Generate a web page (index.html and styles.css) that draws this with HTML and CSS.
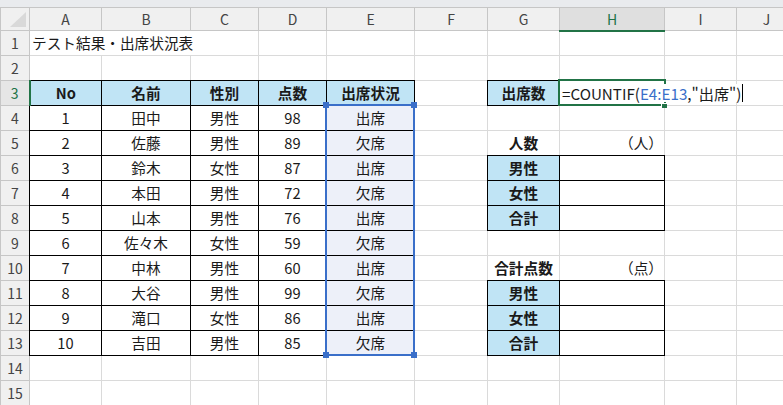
FILE: index.html
```html
<!DOCTYPE html>
<html lang="ja">
<head>
    <meta charset="UTF-8">
    <meta name="viewport" content="width=device-width, initial-scale=1.0">
    <title>テスト結果・出席状況表</title>
    <link rel="stylesheet" href="styles.css">
</head>
<body>

    <div class="toolbar-edge"></div>

    <table class="sheet">
        <colgroup>
            <col class="col-rowhead">
            <col class="col-a">
            <col class="col-b">
            <col class="col-c">
            <col class="col-d">
            <col class="col-e">
            <col class="col-f">
            <col class="col-g">
            <col class="col-h">
            <col class="col-i">
            <col class="col-j">
        </colgroup>
        <thead>
            <tr class="col-heads">
                <th class="corner"></th>
                <th>A</th><th>B</th><th>C</th><th>D</th><th>E</th><th>F</th><th>G</th>
                <th class="current">H</th><th>I</th><th>J</th>
            </tr>
        </thead>
        <tbody>
            <tr>
                <th>1</th>
                <td class="spill">テスト結果・出席状況表</td><td class="spill"></td>
                <td></td><td></td><td></td><td></td><td></td><td></td><td></td><td></td>
            </tr>
            <tr>
                <th>2</th>
                <td></td><td></td><td></td><td></td><td></td><td></td><td></td><td></td><td></td><td></td>
            </tr>
            <tr>
                <th class="current">3</th>
                <td class="head">No</td><td class="head">名前</td><td class="head">性別</td><td class="head">点数</td><td class="head">出席状況</td>
                <td></td>
                <td class="head">出席数</td>
                <td class="active"><span class="formula">=COUNTIF(<span class="ref">E4:E13</span>,"出席")</span></td>
                <td></td><td></td>
            </tr>
            <tr>
                <th>4</th>
                <td class="box">1</td><td class="box">田中</td><td class="box">男性</td><td class="box">98</td>
                <td class="box picked range-top">
                    <div class="range"><i class="knob tl"></i><i class="knob tr"></i><i class="knob bl"></i><i class="knob br"></i></div>出席
                </td>
                <td></td><td></td><td></td><td></td><td></td>
            </tr>
            <tr>
                <th>5</th>
                <td class="box">2</td><td class="box">佐藤</td><td class="box">男性</td><td class="box">89</td><td class="box picked">欠席</td>
                <td></td>
                <td class="label">人数</td><td class="unit">（人）</td>
                <td></td><td></td>
            </tr>
            <tr>
                <th>6</th>
                <td class="box">3</td><td class="box">鈴木</td><td class="box">女性</td><td class="box">87</td><td class="box picked">出席</td>
                <td></td>
                <td class="head">男性</td><td class="box"></td>
                <td></td><td></td>
            </tr>
            <tr>
                <th>7</th>
                <td class="box">4</td><td class="box">本田</td><td class="box">男性</td><td class="box">72</td><td class="box picked">欠席</td>
                <td></td>
                <td class="head">女性</td><td class="box"></td>
                <td></td><td></td>
            </tr>
            <tr>
                <th>8</th>
                <td class="box">5</td><td class="box">山本</td><td class="box">男性</td><td class="box">76</td><td class="box picked">出席</td>
                <td></td>
                <td class="head">合計</td><td class="box"></td>
                <td></td><td></td>
            </tr>
            <tr>
                <th>9</th>
                <td class="box">6</td><td class="box">佐々木</td><td class="box">女性</td><td class="box">59</td><td class="box picked">欠席</td>
                <td></td><td></td><td></td><td></td><td></td>
            </tr>
            <tr>
                <th>10</th>
                <td class="box">7</td><td class="box">中林</td><td class="box">男性</td><td class="box">60</td><td class="box picked">出席</td>
                <td></td>
                <td class="label">合計点数</td><td class="unit">（点）</td>
                <td></td><td></td>
            </tr>
            <tr>
                <th>11</th>
                <td class="box">8</td><td class="box">大谷</td><td class="box">男性</td><td class="box">99</td><td class="box picked">欠席</td>
                <td></td>
                <td class="head">男性</td><td class="box"></td>
                <td></td><td></td>
            </tr>
            <tr>
                <th>12</th>
                <td class="box">9</td><td class="box">滝口</td><td class="box">女性</td><td class="box">86</td><td class="box picked">出席</td>
                <td></td>
                <td class="head">女性</td><td class="box"></td>
                <td></td><td></td>
            </tr>
            <tr>
                <th>13</th>
                <td class="box">10</td><td class="box">吉田</td><td class="box">男性</td><td class="box">85</td><td class="box picked">欠席</td>
                <td></td>
                <td class="head">合計</td><td class="box"></td>
                <td></td><td></td>
            </tr>
            <tr>
                <th>14</th>
                <td></td><td></td><td></td><td></td><td></td><td></td><td></td><td></td><td></td><td></td>
            </tr>
            <tr>
                <th>15</th>
                <td></td><td></td><td></td><td></td><td></td><td></td><td></td><td></td><td></td><td></td>
            </tr>
        </tbody>
    </table>

</body>
</html>
```

FILE: styles.css
```css
:root {
    --grid-line: #dadada;
    --head-bg: #f0f0f0;
    --head-line: #c6c6c6;
    --head-text: #444;
    --fill-blue: #c0e4f5;
    --excel-green: #217346;
    --range-blue: #3a6fc9;
    --range-fill: #edf0f9;
    --font-family: "Noto Sans CJK JP", "Noto Sans", sans-serif;
}

body {
    margin: 0;
    background: #fff;
    color: #1a1a1a;
    font-family: var(--font-family);
    font-size: 14.67px;
    overflow: hidden;
}

/* リボン下端の帯 */
.toolbar-edge {
    height: 7px;
    background: #e9ebee;
}

.sheet {
    border-collapse: collapse;
    table-layout: fixed;
    width: 796px;
}

.col-rowhead { width: 29px; }
.col-a { width: 72px; }
.col-b { width: 89px; }
.col-c { width: 68px; }
.col-d { width: 68px; }
.col-e { width: 88px; }
.col-f { width: 73px; }
.col-g { width: 72px; }
.col-h { width: 105px; }
.col-i { width: 72px; }
.col-j { width: 60px; }

.sheet tr {
    height: 25px;
}

.sheet td,
.sheet th {
    padding: 0 2px;
    border: 1px solid var(--grid-line);
    line-height: 18px;
    white-space: nowrap;
    overflow: visible;
    font-weight: normal;
}

/* 行・列見出し */
.sheet th {
    background: var(--head-bg);
    border-color: var(--head-line);
    color: var(--head-text);
    text-align: center;
    font-size: 14px;
}

.sheet .col-heads {
    height: 23px;
}

.sheet .col-heads th.current {
    background: #dfdfdf;
    color: var(--excel-green);
    border-bottom: 2px solid var(--excel-green);
}

.sheet tbody th.current {
    background: #e6e6e6;
    color: var(--excel-green);
    border-right: 2px solid var(--excel-green);
}

.corner {
    position: relative;
}

.corner::after {
    content: '';
    position: absolute;
    right: 3px;
    bottom: 3px;
    width: 16px;
    height: 15px;
    background: #d9d9d9;
    clip-path: polygon(100% 0, 100% 100%, 0 100%);
}

/* 隣のセルへはみ出す文字列 */
.sheet td.spill {
    border-right: hidden;
}

/* 罫線: 1px の double は実線で描かれ、境界の競合では灰色の枠線に勝つ */
.sheet td.head,
.sheet td.box {
    border: 1px double #000;
    text-align: center;
}

.sheet td.head {
    background: var(--fill-blue);
    font-weight: 700;
}

.sheet td.label {
    text-align: center;
    font-weight: 700;
}

.sheet td.unit {
    text-align: right;
    padding-right: 1px;
}

/* 数式で参照中の範囲 E4:E13 */
.sheet td.picked {
    background: var(--range-fill);
}

.sheet td.range-top {
    position: relative;
}

.range {
    position: absolute;
    left: -2px;
    top: -2px;
    width: 90px;
    height: 252px;
    box-sizing: border-box;
    border: 2px solid var(--range-blue);
    pointer-events: none;
}

.knob {
    position: absolute;
    width: 6px;
    height: 6px;
    background: var(--range-blue);
}

.knob.tl { left: -4px; top: -4px; }
.knob.tr { right: -4px; top: -4px; }
.knob.bl { left: -4px; bottom: -4px; }
.knob.br { right: -4px; bottom: -4px; }

/* 編集中のアクティブセル H3 */
.sheet td.active {
    position: relative;
}

.sheet td.active::before {
    content: '';
    position: absolute;
    left: -2px;
    top: -2px;
    width: 108px;
    height: 27px;
    box-sizing: border-box;
    border: 2px solid var(--excel-green);
}

.sheet td.active::after {
    content: '';
    position: absolute;
    right: -3px;
    bottom: -3px;
    width: 5px;
    height: 4px;
    background: var(--excel-green);
    border-left: 1px solid #fff;
    border-top: 1px solid #fff;
}

.formula {
    position: relative;
    z-index: 1;
    display: inline-block;
    padding-right: 1px;
    background: #fff;
    border-right: 1px solid #000;
    color: #1a1a1a;
    font-size: 15.2px;
}

.formula .ref {
    color: var(--range-blue);
}
```
